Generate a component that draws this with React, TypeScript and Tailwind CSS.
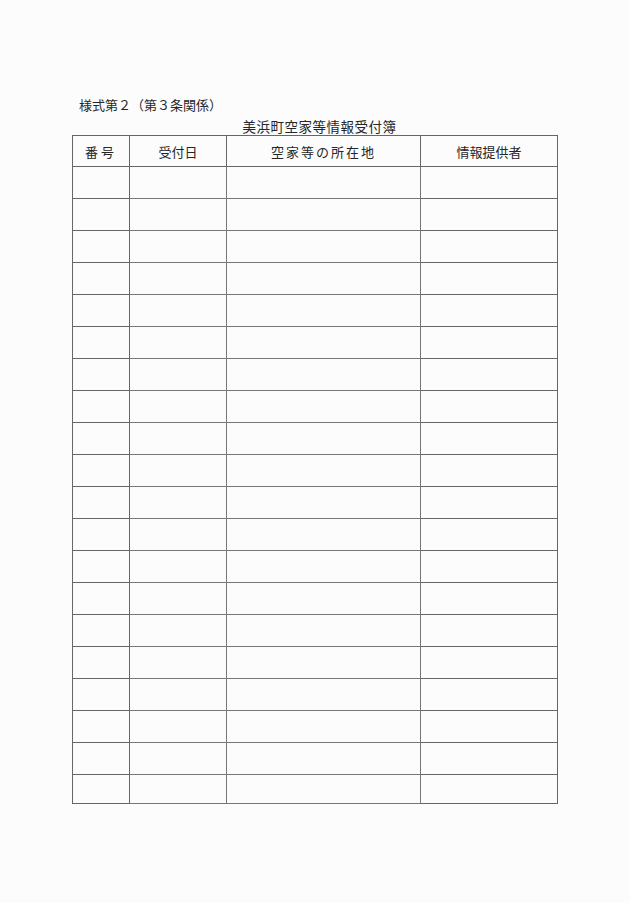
const headers = [
  {label: '番号', w: 'w-[57px]', track: 'tracking-[3px]'},
  {label: '受付日', w: 'w-[97px]', track: 'tracking-[0px]'},
  {label: '空家等の所在地', w: 'w-[194px]', track: 'tracking-[2px]'},
  {label: '情報提供者', w: 'w-[137px]', track: 'tracking-[0px]'},
];

const rows = Array.from({length: 20}, (_, i) => i);

export default function App() {
  return (
    <main className="min-h-screen w-full bg-[#fcfcfc] text-[#262626] font-['Noto_Sans_CJK_JP',sans-serif]">
      <div className="pt-[96px] pl-[72px] w-[557px]">
        <p className="pl-[7px] text-[13px] leading-[18px]">様式第２（第３条関係）</p>
        <p className="mt-[3px] pl-[10px] text-center text-[13.5px] leading-[18px] tracking-[0.5px]">
          美浜町空家等情報受付簿
        </p>
        <table className="w-[485px] border-collapse table-fixed">
          <thead>
            <tr className="h-[31px]">
              {headers.map(h => (
                <th
                  key={h.label}
                  className={`${h.w} border border-[#666] text-center text-[13px] font-normal leading-none`}>
                  <span className={h.track}>{h.label}</span>
                </th>
              ))}
            </tr>
          </thead>
          <tbody>
            {rows.map(r => (
              <tr key={r} className={r === 19 ? 'h-[29px]' : 'h-[32px]'}>
                <td className="border border-[#666]" />
                <td className="border border-[#777]" />
                <td className="border border-[#777]" />
                <td className="border border-[#666]" />
              </tr>
            ))}
          </tbody>
        </table>
      </div>
    </main>
  );
}
